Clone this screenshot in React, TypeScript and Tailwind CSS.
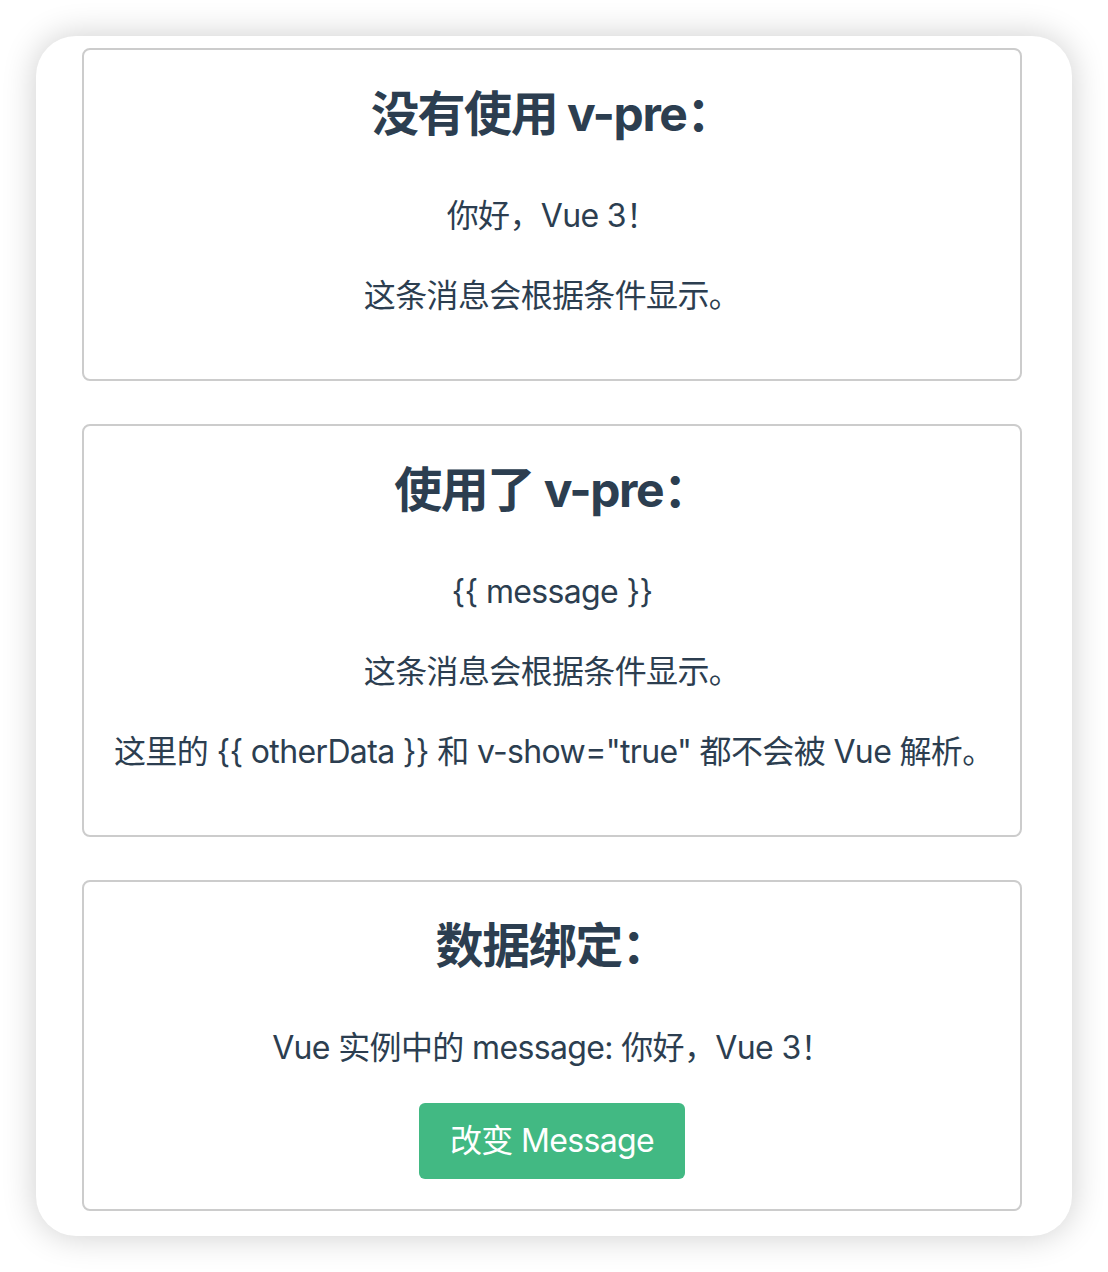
import React from "react";

const font = { fontFamily: 'Inter, "Noto Sans CJK SC", "Noto Sans", sans-serif' };

function Heading({ children }: { children: React.ReactNode }) {
  return (
    <h2 className="m-0 h-[70px] text-center text-[48px] font-bold leading-[70px] tracking-[-0.03em] text-[#2c3e50]">
      {children}
    </h2>
  );
}

function P({ children, first }: { children: React.ReactNode; first?: boolean }) {
  return (
    <p
      className={
        (first ? "mt-[44px] " : "mt-[34px] ") +
        "mb-0 whitespace-nowrap text-center text-[32px] leading-[46px] tracking-[-0.02em] text-[#2c3e50]"
      }
    >
      {children}
    </p>
  );
}

function Box({ children }: { children: React.ReactNode }) {
  return (
    <div className="rounded-[8px] border-2 border-[#cccccc] px-[30px] pt-[29px] pb-[30px]">
      {children}
    </div>
  );
}

export default function App() {
  return (
    <div className="min-h-[1272px] w-[1108px] bg-white pt-[36px]" style={font}>
      <div className="mx-[36px] h-[1200px] rounded-[40px] bg-white pl-[46px] pr-[50px] pt-[12px] shadow-[0_0_34px_rgba(0,0,0,0.2)]">
        <div className="flex flex-col gap-[43px]">
          <Box>
            <Heading>没有使用 v-pre：</Heading>
            <P first>你好，Vue 3！</P>
            <P>这条消息会根据条件显示。</P>
            <div className="h-[30px]" />
          </Box>
          <Box>
            <Heading>使用了 v-pre：</Heading>
            <P first>{"{{ message }}"}</P>
            <P>这条消息会根据条件显示。</P>
            <P>{'这里的 {{ otherData }} 和 v-show="true" 都不会被 Vue 解析。'}</P>
            <div className="h-[30px]" />
          </Box>
          <Box>
            <Heading>数据绑定：</Heading>
            <P first>Vue 实例中的 message: 你好，Vue 3！</P>
            <div className="mt-[32px] flex justify-center">
              <button className="flex h-[76px] w-[266px] items-center justify-center rounded-[6px] bg-[#42b983] text-[32px] leading-[46px] tracking-[-0.02em] text-white">
                改变 Message
              </button>
            </div>
          </Box>
        </div>
      </div>
    </div>
  );
}
